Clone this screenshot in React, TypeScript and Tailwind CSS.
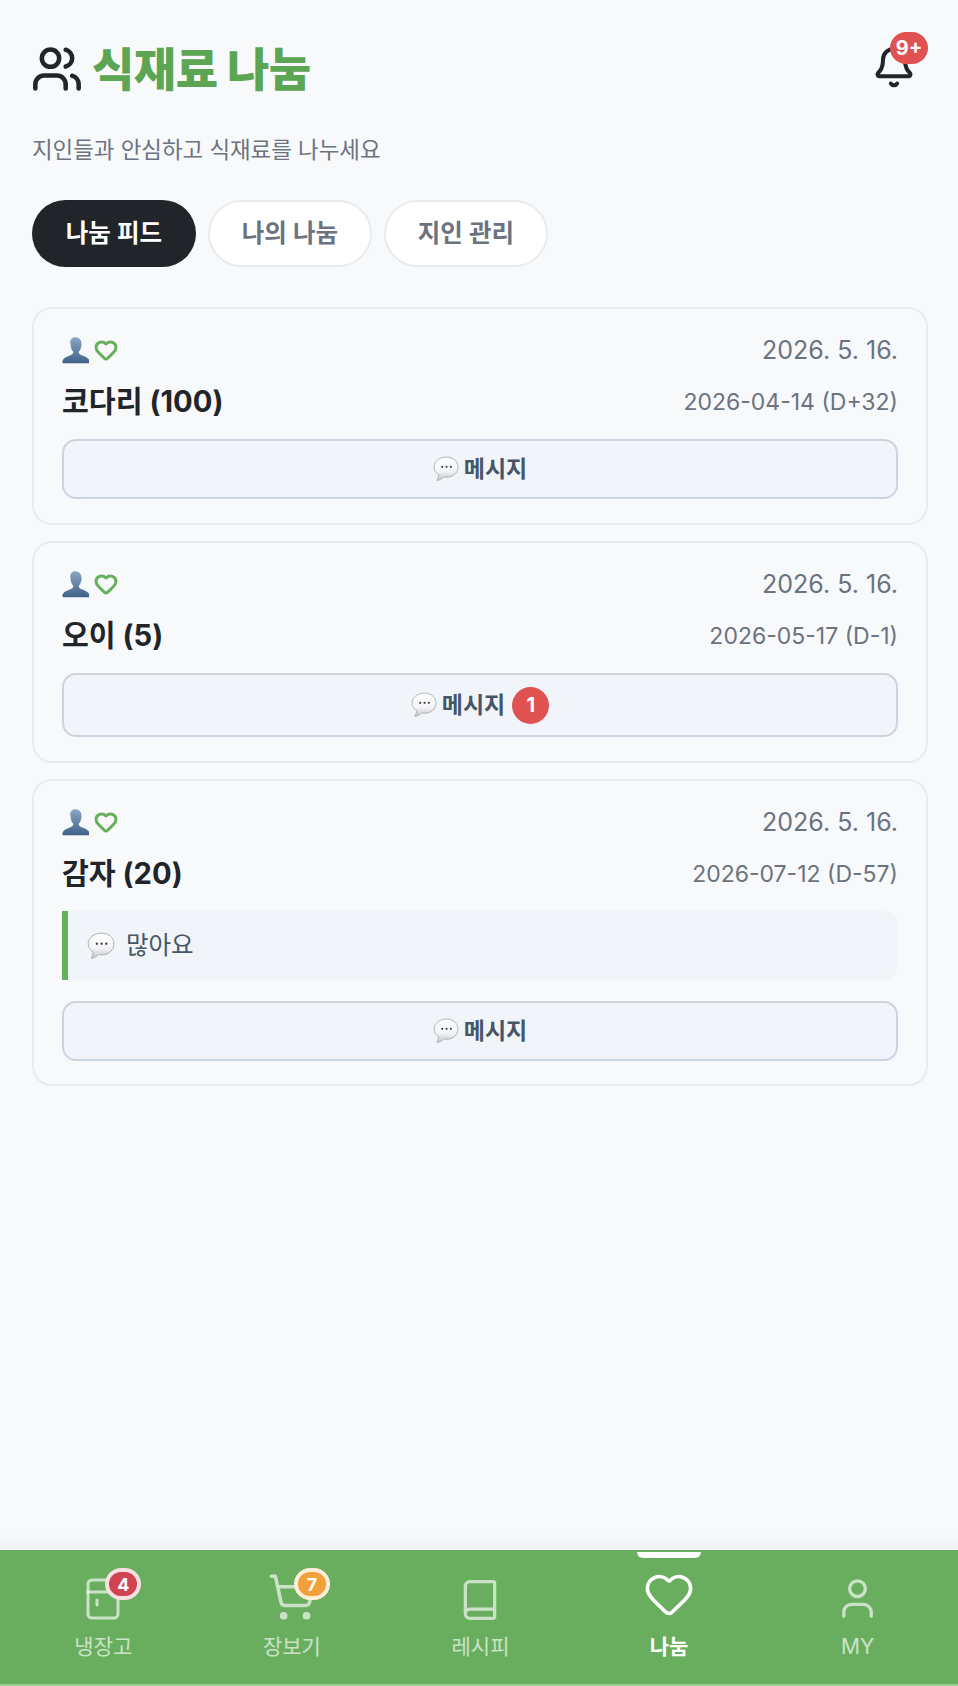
import React from "react";
import { Users, Bell, ShoppingCart, Book, Heart, User } from "lucide-react";

const font = { fontFamily: '"Inter","Noto Sans CJK KR",sans-serif' };

function Bust() {
  return (
    <svg width="27" height="27" viewBox="1.500 1.200 25 25" className="shrink-0">
      <defs>
        <linearGradient id="bustg" x1="0" y1="0" x2="0" y2="1">
          <stop offset="0" stopColor="#8ba6c4" />
          <stop offset="1" stopColor="#3f6288" />
        </linearGradient>
      </defs>
      <path d="M14 1.500c3.600 0 5.600 2.800 5.600 6.300 0 3-1.200 5.500-2.600 7 0 1.600.6 2.400 2.600 3.200 3 1.200 6.400 2.200 7.400 5.200.3 1 .2 2.300-.8 2.300H2.800c-1 0-1.100-1.300-.8-2.300 1-3 4.400-4 7.400-5.200 2-.8 2.600-1.600 2.600-3.200-1.400-1.500-2.600-4-2.600-7C8.400 4.300 10.400 1.500 14 1.500z" fill="url(#bustg)" />
    </svg>
  );
}

function Bubble({ size = 26 }: { size?: number }) {
  return (
    <svg width={size} height={size} viewBox="0 0 24 24" className="shrink-0">
      <defs>
        <linearGradient id="bubg" x1="0" y1="0" x2="0" y2="1">
          <stop offset="0" stopColor="#ffffff" />
          <stop offset="0.6" stopColor="#f4f5f6" />
          <stop offset="1" stopColor="#c2c5ca" />
        </linearGradient>
      </defs>
      <path d="M12.500 1C6.300 1 1 4.800 1 10.200c0 3 1.700 5.400 4.200 7 .1 1.700-.6 3.600-1.700 5.300 2.600-.2 4.900-1.500 6.300-3.200.9.200 1.800.3 2.700.3 6.200 0 10.500-4 10.500-9.400S18.700 1 12.500 1z" fill="url(#bubg)" stroke="#a8abb1" strokeWidth="0.8" />
      <circle cx="8.500" cy="10" r="1" fill="#3f4247" />
      <circle cx="12.500" cy="10" r="1" fill="#3f4247" />
      <circle cx="16.500" cy="10" r="1" fill="#3f4247" />
    </svg>
  );
}

function Fridge() {
  return (
    <svg width="36" height="42" viewBox="0 0 36 42" fill="none" stroke="currentColor" strokeWidth="3" strokeLinecap="round">
      <rect x="3" y="2" width="30" height="38" rx="4" />
      <path d="M3 14h30" />
      <path d="M12 22v5" />
    </svg>
  );
}

function MessageButton({ count }: { count?: number }) {
  return (
    <button className={`w-full flex items-center justify-center gap-[5px] rounded-[14px] border-2 border-[#cbd5e1] bg-[#f1f5f9] text-[#475569] text-[23px] font-bold leading-none ${count ? "h-[64px]" : "h-[60px]"}`}>
      <Bubble />
      <span>메시지</span>
      {count ? (
        <span className="ml-[2px] w-[37px] h-[37px] rounded-full bg-[#e05252] text-white text-[20px] font-bold flex items-center justify-center">{count}</span>
      ) : null}
    </button>
  );
}

function Card({ name, date, count, note }: { name: string; date: string; count?: number; note?: string }) {
  return (
    <div className={`rounded-[20px] border-2 border-[#e9ecef] bg-[#f8f9fa] px-[28px] pt-[27px] ${note ? "pb-[23px]" : "pb-[24px]"}`}>
      <div className="flex items-center justify-between h-[28px]">
        <div className="flex items-center gap-[5px]">
          <Bust />
          <Heart size={24} strokeWidth={3} className="text-[#66b05c]" />
        </div>
        <span className="text-[25px] text-[#6b7280] leading-none">2026. 5. 16.</span>
      </div>
      <div className="flex items-center justify-between mt-[20px] h-[36px]">
        <span className="text-[29.200px] font-bold text-[#212529] leading-none">{name}</span>
        <span className="text-[23px] text-[#6b7280] leading-none">{date}</span>
      </div>
      {note ? (
        <div className="mt-[19px] flex items-center gap-[11px] h-[69px] pl-[19px] border-l-[6px] border-[#66b05c] bg-[#f1f5f9] rounded-r-[14px] text-[24.500px] text-[#475569]">
          <Bubble size={28} />
          <span>{note}</span>
        </div>
      ) : null}
      <div className={note ? "mt-[21px]" : "mt-[19px]"}>
        <MessageButton count={count} />
      </div>
    </div>
  );
}

function NavItem({ icon, label, active, badge, badgeClass }: { icon: React.ReactNode; label: string; active?: boolean; badge?: string; badgeClass?: string }) {
  return (
    <div className={`relative flex-1 flex flex-col items-center ${active ? "text-white" : "text-white/65"}`}>
      {active ? <span className="absolute top-[2px] w-[64px] h-[6px] rounded-b-[6px] bg-white" /> : null}
      <div className="relative h-[73px] flex items-end justify-center pb-[3px]">
        {icon}
        {badge ? (
          <span className={`absolute top-[18px] w-[36px] h-[32px] rounded-full border-[4px] flex items-center justify-center text-white text-[18px] font-bold ${badgeClass}`}>{badge}</span>
        ) : null}
      </div>
      <span className={`mt-[13px] text-[21px] leading-none ${active ? "font-bold" : ""}`}>{label}</span>
    </div>
  );
}

export default function App() {
  return (
    <div style={font} className="min-h-screen flex flex-col bg-[#f8f9fa]">
      <main className="flex-1 px-[32px] pt-[39px]">
        <div className="flex items-start justify-between">
          <h1 className="flex items-center gap-[9px] h-[60px]">
            <Users size={52} strokeWidth={2.100} className="text-[#212529] ml-[-1px]" />
            <span className="text-[46px] font-extrabold text-[#5ca553] leading-none tracking-[-0.5px]">식재료 나눔</span>
          </h1>
          <div className="relative mr-[10px] mt-[6px]">
            <Bell size={44} strokeWidth={2.200} className="text-[#212529]" />
            <span className="absolute top-[-13px] right-[-12px] w-[38px] h-[32px] rounded-full bg-[#e05252] text-white text-[20px] font-bold flex items-center justify-center">9+</span>
          </div>
        </div>
        <p className="mt-[35px] text-[22.400px] text-[#6b7280] leading-[32px]">지인들과 안심하고 식재료를 나누세요</p>
        <div className="flex gap-[12px] mt-[34px]">
          <button className="w-[164px] h-[67px] rounded-full bg-[#212529] text-white text-[24.500px] font-semibold">나눔 피드</button>
          <button className="w-[164px] h-[67px] rounded-full bg-white border-2 border-[#e9ecef] text-[#6b7280] text-[24.500px] font-semibold">나의 나눔</button>
          <button className="w-[164px] h-[67px] rounded-full bg-white border-2 border-[#e9ecef] text-[#6b7280] text-[24.500px] font-semibold">지인 관리</button>
        </div>
        <div className="mt-[40px] flex flex-col gap-[16px] mr-[-2px]">
          <Card name="코다리 (100)" date="2026-04-14 (D+32)" />
          <Card name="오이 (5)" date="2026-05-17 (D-1)" count={1} />
          <Card name="감자 (20)" date="2026-07-12 (D-57)" note="많아요" />
        </div>
      </main>
      <div className="h-[20px] bg-gradient-to-b from-[#f8f9fa] to-[#f1f3f5]" />
      <nav className="flex h-[136px] pl-[9px] pr-[6px] bg-[#68ae5e] border-b-2 border-[#9fcb98]">
        <NavItem icon={<Fridge />} label="냉장고" badge="4" badgeClass="left-[20px] bg-[#cf4450] border-[#f8dfe0]" />
        <NavItem icon={<span className="mb-[-2px]"><ShoppingCart size={50} strokeWidth={1.700} /></span>} label="장보기" badge="7" badgeClass="left-[27px] bg-[#f2a03a] border-[#fdeed9]" />
        <NavItem icon={<span className="mb-[-2px]"><Book size={44} strokeWidth={1.800} /></span>} label="레시피" />
        <NavItem icon={<Heart size={52} strokeWidth={1.700} />} label="나눔" active />
        <NavItem icon={<span className="mb-[-2px]"><User size={47} strokeWidth={1.700} /></span>} label="MY" />
      </nav>
    </div>
  );
}
